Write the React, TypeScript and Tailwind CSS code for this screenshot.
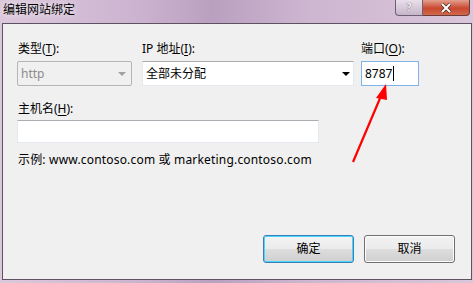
import React from 'react';

const font = { fontFamily: '"Noto Sans", "Noto Sans CJK SC", sans-serif' };

function U({ children }: { children: React.ReactNode }) {
  return <span className="underline underline-offset-2">{children}</span>;
}

function Arrow() {
  return (
    <svg className="absolute left-0 top-0 pointer-events-none" width="473" height="283">
      <line x1="353" y1="162" x2="381" y2="96" stroke="#ff0000" strokeWidth="2.2" />
      <polygon points="386,84 376,98 387,100" fill="#ff0000" />
    </svg>
  );
}

export default function App() {
  return (
    <div
      className="relative w-[473px] h-[283px] flex flex-col overflow-hidden text-[12px] text-black"
      style={font}
    >
      {/* Aero frame */}
      <div className="absolute inset-0 bg-[linear-gradient(90deg,#dcc8dc_0%,#cbb3cf_30%,#b9a0c0_45%,#cdb6d0_65%,#d9c6da_100%)]" />

      {/* Title bar */}
      <div className="relative h-[23px] flex items-start justify-between">
        <span className="pl-[3px] pt-[2px] leading-[16px] [text-shadow:0_0_6px_#fff]">编辑网站绑定</span>
        <div className="flex mr-[3px]">
          <div className="w-[28px] h-[16px] rounded-bl-[4px] border border-t-0 border-[#6d5f74] bg-[linear-gradient(180deg,#e9dfea,#c6b5c9)] flex items-center justify-center text-[11px] font-bold text-[#f7f2f7] [text-shadow:0_0_1px_#333]">
            ?
          </div>
          <div className="w-[47px] h-[16px] rounded-br-[4px] border border-l-0 border-t-0 border-[#6d3b3b] bg-[linear-gradient(180deg,#e3a08f,#c9482f_55%,#d06a4e)] flex items-center justify-center">
            <svg width="12" height="10" viewBox="0 0 12 10">
              <path d="M2 1 L10 9 M10 1 L2 9" stroke="#4b2a24" strokeWidth="3.4" />
              <path d="M2 1 L10 9 M10 1 L2 9" stroke="#fff" strokeWidth="2" />
            </svg>
          </div>
        </div>
      </div>

      {/* Client area */}
      <div className="relative ml-[2px] w-[470px] h-[257px] border border-[#5c5262] bg-[#f0f0f0] flex flex-col pl-[14px] pt-[17px]">
        <div className="flex leading-[16px]">
          <div className="flex flex-col w-[125px]">
            <span className="pl-[1px]">类型(<U>T</U>):</span>
            <div className="mt-[4px] w-[115px] h-[25px] border border-[#b5b5b5] rounded-[2px] bg-[#f0f0f0] flex items-center justify-between pl-[3px] pr-[5px] text-[#8d8d8d]">
              <span>http</span>
              <span className="w-0 h-0 border-l-[4px] border-r-[4px] border-t-[4px] border-l-transparent border-r-transparent border-t-[#a0a0a0]" />
            </div>
          </div>
          <div className="flex flex-col w-[219px]">
            <span>IP 地址(<U>I</U>):</span>
            <div className="mt-[4px] w-[212px] h-[25px] border border-[#e3e9ef] border-t-[#abadb3] bg-white flex items-center justify-between pl-[3px] pr-[3px]">
              <span>全部未分配</span>
              <span className="w-0 h-0 border-l-[4px] border-r-[4px] border-t-[4px] border-l-transparent border-r-transparent border-t-black" />
            </div>
          </div>
          <div className="flex flex-col">
            <span>端口(<U>O</U>):</span>
            <div className="mt-[4px] w-[58px] h-[25px] border border-[#7eb4ea] bg-white flex items-center pl-[3px]">
              <span>8787</span>
              <span className="ml-[1px] w-[1px] h-[15px] bg-black" />
            </div>
          </div>
        </div>

        <span className="mt-[15px] pl-[1px] leading-[16px]">主机名(<U>H</U>):</span>
        <div className="mt-[3px] w-[302px] h-[23px] border border-[#e3e9ef] border-t-[#abadb3] bg-white" />
        <span className="mt-[9px] pl-[1px] leading-[16px] tracking-[0.18px]">示例: www.contoso.com 或 marketing.contoso.com</span>

        <div className="mt-auto mb-[16px] mr-[16px] flex justify-end gap-[10px]">
          <button className="w-[91px] h-[28px] rounded-[3px] border border-[#3c7fb1] shadow-[inset_0_0_0_1px_#48d5ff] bg-[linear-gradient(180deg,#f4f4f4_0%,#ebebeb_50%,#dddddd_51%,#cfcfcf_100%)] leading-[16px]">
            确定
          </button>
          <button className="w-[91px] h-[28px] rounded-[3px] border border-[#707070] shadow-[inset_0_0_0_1px_#fcfcfc] bg-[linear-gradient(180deg,#f2f2f2_0%,#ebebeb_50%,#dddddd_51%,#cfcfcf_100%)] leading-[16px]">
            取消
          </button>
        </div>
      </div>

      <Arrow />
    </div>
  );
}
